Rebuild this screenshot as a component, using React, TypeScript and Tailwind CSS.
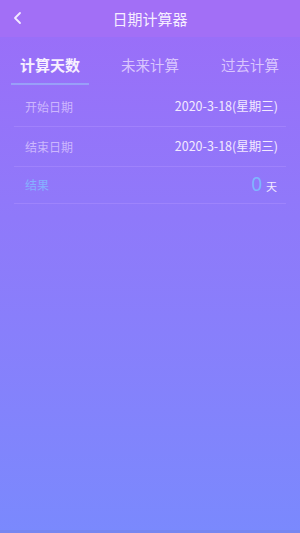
import React from "react";

export default function App() {
  const font = { fontFamily: '"Noto Sans CJK SC", "Noto Sans", sans-serif' };
  return (
    <div
      className="w-[300px] h-[533px] flex flex-col bg-gradient-to-b from-[#9b6df8] to-[#7a89fd] overflow-hidden"
      style={font}
    >
      <div className="h-[37px] bg-[#a26ff6] flex items-center relative shrink-0">
        <svg className="absolute left-[12px] top-[11px]" width="12" height="14" viewBox="0 0 12 14">
          <path d="M8 2 L3 7 L8 12" fill="none" stroke="#f3eaff" strokeWidth="1.8" strokeLinecap="round" strokeLinejoin="round" />
        </svg>
        <div className="flex-1 text-center text-[15px] text-[#f6eeff] leading-none">日期计算器</div>
      </div>
      <div className="grid grid-cols-3 pt-[18px] h-[50px] shrink-0">
        <div className="flex flex-col items-center">
          <div className="text-[15px] leading-[20px] font-bold text-[#f7f0ff]">计算天数</div>
          <div className="mt-[8px] h-[2px] w-[78px] bg-[#9ab2f8]/70"></div>
        </div>
        <div className="flex justify-center">
          <div className="text-[14.5px] leading-[20px] text-[#e6d6ff]/85">未来计算</div>
        </div>
        <div className="flex justify-center">
          <div className="text-[14.5px] leading-[20px] text-[#e6d6ff]/85">过去计算</div>
        </div>
      </div>
      <div className="flex flex-col px-[14px]">
        <div className="flex items-center justify-between h-[40px] border-b border-[#b495ff]/40 pl-[11px] pr-[8px]">
          <span className="text-[12px] text-[#e6d5ff]/70">开始日期</span>
          <span className="text-[12.5px] text-[#f3eaff]">2020-3-18(星期三)</span>
        </div>
        <div className="flex items-center justify-between h-[40px] border-b border-[#b495ff]/40 pl-[11px] pr-[8px]">
          <span className="text-[12px] text-[#e6d5ff]/70">结束日期</span>
          <span className="text-[12.5px] text-[#f3eaff]">2020-3-18(星期三)</span>
        </div>
        <div className="flex items-center justify-between h-[37px] border-b border-[#b495ff]/40 pl-[11px] pr-[9px]">
          <span className="text-[12px] text-[#86b0ff]">结果</span>
          <span className="flex items-baseline gap-[4px]">
            <span className="text-[19px] leading-none text-[#7fb6ff]" style={{ fontFamily: '"Noto Sans", sans-serif' }}>0</span>
            <span className="text-[11px] text-[#f3eaff]">天</span>
          </span>
        </div>
      </div>
      <div className="flex-1"></div>
      <div className="h-[3px] bg-[#7583e8]/60"></div>
    </div>
  );
}
